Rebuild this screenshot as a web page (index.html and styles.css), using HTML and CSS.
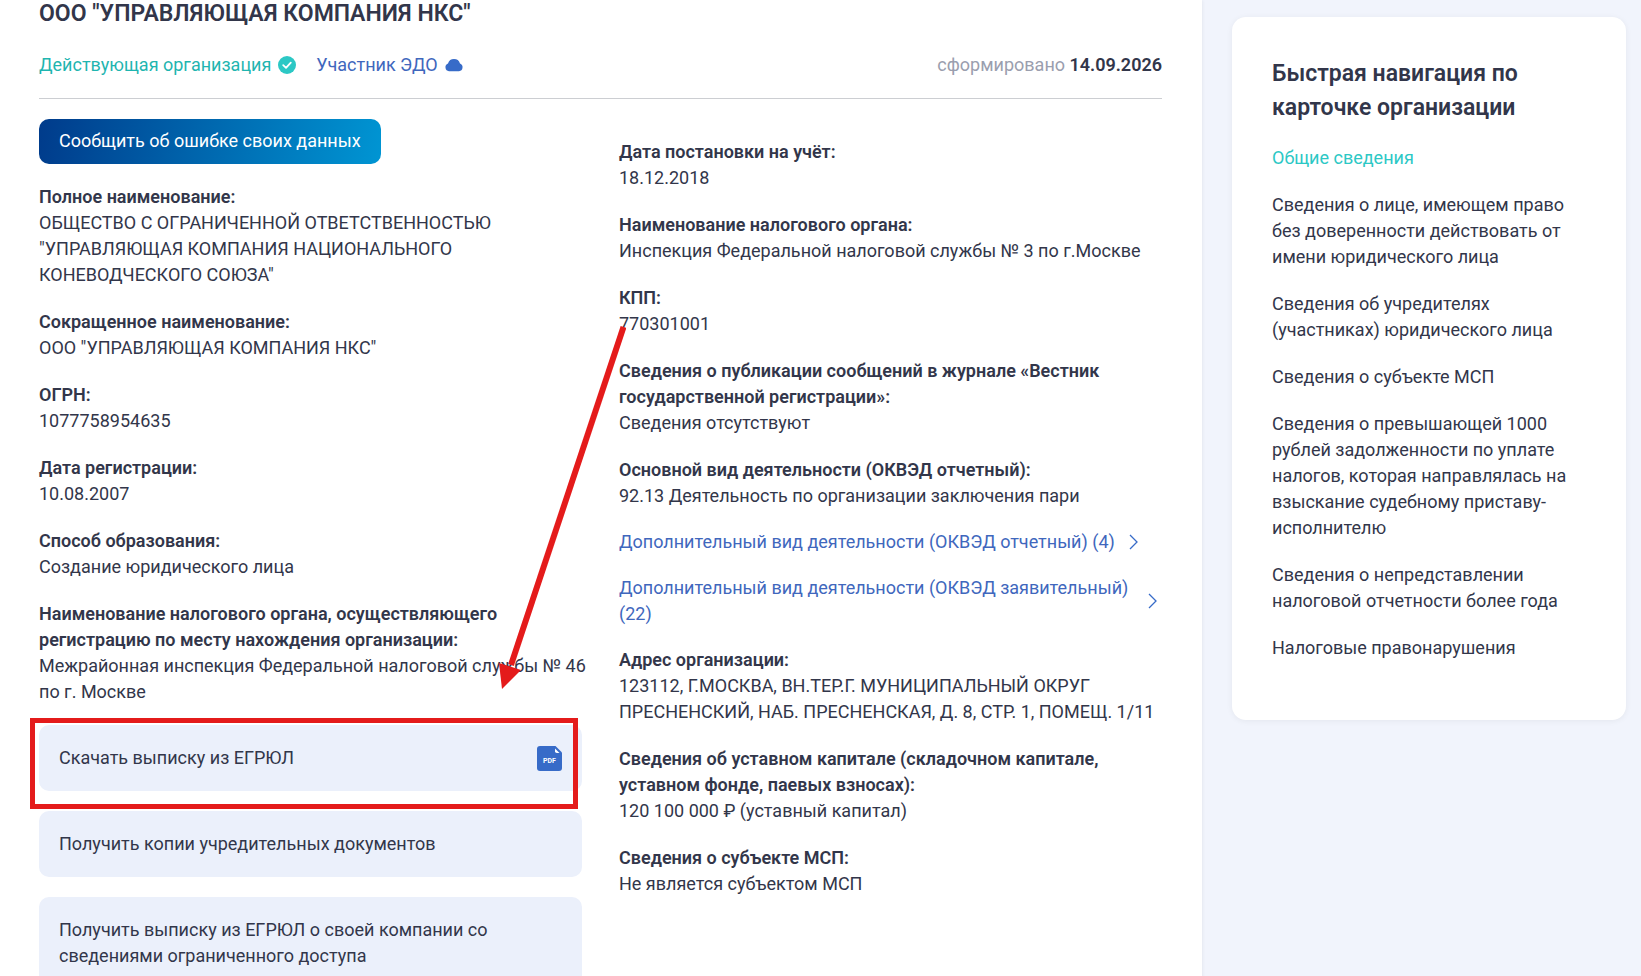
FILE: index.html
```html
<!DOCTYPE html>
<html lang="ru">
<head>
    <meta charset="UTF-8">
    <meta name="viewport" content="width=device-width, initial-scale=1.0">
    <title>ООО "УПРАВЛЯЮЩАЯ КОМПАНИЯ НКС"</title>
    <link rel="stylesheet" href="styles.css">
</head>
<body>
    <div class="page">
        <main class="card">
            <h1>ООО "УПРАВЛЯЮЩАЯ КОМПАНИЯ НКС"</h1>
            <div class="status-row">
                <span class="status status-active">Действующая организация
                    <svg width="18" height="18" viewBox="0 0 18 18" aria-hidden="true">
                        <circle cx="9" cy="9" r="9" fill="#2cc8c5"/>
                        <path d="M5.2 9.2 L8 11.8 L12.8 6.6" fill="none" stroke="#fff" stroke-width="1.8" stroke-linecap="round" stroke-linejoin="round"/>
                    </svg>
                </span>
                <span class="status status-edo">Участник ЭДО
                    <svg width="18" height="18" viewBox="0 0 18 18" aria-hidden="true">
                        <path d="M4 15.2 A4 4 0 0 1 3 7.5 A6.300 6.300 0 0 1 15 7.500 A4 4 0 0 1 14 15.2 Z" fill="#376bc8"/>
                    </svg>
                </span>
                <span class="formed">сформировано <b>14.09.2026</b></span>
            </div>

            <div class="columns">
                <div class="column">
                    <button type="button" class="report-button">Сообщить об ошибке своих данных</button>
                    <dl class="info">
                        <div>
                            <dt>Полное наименование:</dt>
                            <dd>ОБЩЕСТВО С ОГРАНИЧЕННОЙ ОТВЕТСТВЕННОСТЬЮ "УПРАВЛЯЮЩАЯ КОМПАНИЯ НАЦИОНАЛЬНОГО КОНЕВОДЧЕСКОГО СОЮЗА"</dd>
                        </div>
                        <div>
                            <dt>Сокращенное наименование:</dt>
                            <dd>ООО "УПРАВЛЯЮЩАЯ КОМПАНИЯ НКС"</dd>
                        </div>
                        <div>
                            <dt>ОГРН:</dt>
                            <dd>1077758954635</dd>
                        </div>
                        <div>
                            <dt>Дата регистрации:</dt>
                            <dd>10.08.2007</dd>
                        </div>
                        <div>
                            <dt>Способ образования:</dt>
                            <dd>Создание юридического лица</dd>
                        </div>
                        <div>
                            <dt>Наименование налогового органа, осуществляющего регистрацию по месту нахождения организации:</dt>
                            <dd class="nowrap">Межрайонная инспекция Федеральной налоговой службы № 46<br>по г. Москве</dd>
                        </div>
                    </dl>
                    <div class="actions">
                        <a href="#" class="action action-marked">
                            <span>Скачать выписку из ЕГРЮЛ</span>
                            <svg class="pdf-icon" width="25" height="25" viewBox="0 0 25 25" aria-hidden="true">
                                <path d="M3 0 H18.5 L25 6.5 V22 A3 3 0 0 1 22 25 H3 A3 3 0 0 1 0 22 V3 A3 3 0 0 1 3 0 Z" fill="#376bc8"/>
                                <path d="M18 2.5 V5.2 A1.8 1.8 0 0 0 19.8 7 H22.5 Z" fill="#fff"/>
                                <text x="12.5" y="16.5" text-anchor="middle" class="pdf-text">PDF</text>
                            </svg>
                        </a>
                        <a href="#" class="action">Получить копии учредительных документов</a>
                        <a href="#" class="action">Получить выписку из ЕГРЮЛ о своей компании со сведениями ограниченного доступа</a>
                    </div>
                </div>

                <div class="column column-right">
                    <dl class="info">
                        <div>
                            <dt>Дата постановки на учёт:</dt>
                            <dd>18.12.2018</dd>
                        </div>
                        <div>
                            <dt>Наименование налогового органа:</dt>
                            <dd>Инспекция Федеральной налоговой службы № 3 по г.Москве</dd>
                        </div>
                        <div>
                            <dt>КПП:</dt>
                            <dd>770301001</dd>
                        </div>
                        <div>
                            <dt>Сведения о публикации сообщений в журнале «Вестник государственной регистрации»:</dt>
                            <dd>Сведения отсутствуют</dd>
                        </div>
                        <div>
                            <dt>Основной вид деятельности (ОКВЭД отчетный):</dt>
                            <dd>92.13 Деятельность по организации заключения пари</dd>
                        </div>
                    </dl>
                    <div class="more-links">
                        <a href="#" class="more">
                            <span>Дополнительный вид деятельности (ОКВЭД отчетный) (4)</span>
                            <svg width="20" height="20" viewBox="0 0 20 20" aria-hidden="true">
                                <path d="M7 3 L14 10 L7 17" fill="none" stroke="#376bc8" stroke-width="1.3"/>
                            </svg>
                        </a>
                        <a href="#" class="more">
                            <span>Дополнительный вид деятельности (ОКВЭД заявительный) (22)</span>
                            <svg width="20" height="20" viewBox="0 0 20 20" aria-hidden="true">
                                <path d="M7 3 L14 10 L7 17" fill="none" stroke="#376bc8" stroke-width="1.3"/>
                            </svg>
                        </a>
                    </div>
                    <dl class="info">
                        <div>
                            <dt>Адрес организации:</dt>
                            <dd>123112, Г.МОСКВА, ВН.ТЕР.Г. МУНИЦИПАЛЬНЫЙ ОКРУГ ПРЕСНЕНСКИЙ, НАБ. ПРЕСНЕНСКАЯ, Д. 8, СТР. 1, ПОМЕЩ. 1/11</dd>
                        </div>
                        <div>
                            <dt>Сведения об уставном капитале (складочном капитале, уставном фонде, паевых взносах):</dt>
                            <dd>120 100 000 ₽ (уставный капитал)</dd>
                        </div>
                        <div>
                            <dt>Сведения о субъекте МСП:</dt>
                            <dd>Не является субъектом МСП</dd>
                        </div>
                    </dl>
                </div>
            </div>

            <svg class="arrow" width="130" height="370" viewBox="0 0 130 370" aria-hidden="true">
                <path d="M127.5 7 L15 345" stroke="#e41b1b" stroke-width="6"/>
                <path d="M3 343 L25 350 L6 369 Z" fill="#e41b1b"/>
            </svg>
        </main>

        <aside class="sidebar">
            <nav class="quick-nav" aria-labelledby="navTitle">
                <h2 id="navTitle">Быстрая навигация по карточке организации</h2>
                <ul>
                    <li><a href="#" class="current">Общие сведения</a></li>
                    <li><a href="#">Сведения о лице, имеющем право без доверенности действовать от имени юридического лица</a></li>
                    <li><a href="#">Сведения об учредителях (участниках) юридического лица</a></li>
                    <li><a href="#">Сведения о субъекте МСП</a></li>
                    <li><a href="#">Сведения о превышающей 1000 рублей задолженности по уплате налогов, которая направлялась на взыскание судебному приставу-исполнителю</a></li>
                    <li><a href="#">Сведения о непредставлении налоговой отчетности более года</a></li>
                    <li><a href="#">Налоговые правонарушения</a></li>
                </ul>
            </nav>
        </aside>
    </div>
</body>
</html>
```
FILE: styles.css
```css
* {
    box-sizing: border-box;
}
html {
    scrollbar-width: none;
}
body {
    margin: 0;
    font-family: Roboto, "Liberation Sans", sans-serif;
    font-size: 18px;
    line-height: 26px;
    color: #32364a;
    background-color: #f1f4fc;
}
a {
    color: inherit;
    text-decoration: none;
}
.page {
    display: flex;
    min-height: 100vh;
}
.card {
    position: relative;
    flex: 1;
    padding: 0 40px 40px 39px;
    background-color: #fff;
    box-shadow: 0 0 4px rgba(0, 0, 0, 0.08);
}
h1 {
    margin: 0 0 24px;
    font-size: 23px;
    line-height: 28px;
    font-weight: 600;
}
.status-row {
    display: flex;
    align-items: center;
    gap: 20px;
    padding-bottom: 20px;
    border-bottom: 1px solid #ccced2;
}
.status {
    display: flex;
    align-items: center;
    gap: 7px;
}
.status-active {
    color: #1fb5b0;
}
.status-edo {
    color: #4067bd;
}
.formed {
    margin-left: auto;
    color: #9a9eae;
}
.formed b {
    font-weight: 600;
    color: #32364a;
}
.columns {
    display: grid;
    grid-template-columns: minmax(0, 1fr) minmax(0, 1fr);
    gap: 37px;
    padding-top: 20px;
}
.column-right {
    padding-top: 20px;
}
.report-button {
    display: block;
    height: 45px;
    margin-bottom: 20px;
    padding: 0 20px 2px;
    border: none;
    border-radius: 10px;
    background: linear-gradient(100deg, #003b8b, #0095d3);
    color: #fff;
    font-family: inherit;
    font-size: 18px;
    cursor: pointer;
}
.info {
    display: grid;
    gap: 21px;
    margin: 0;
}
dt {
    font-weight: 600;
}
dd {
    margin: 0;
}
.nowrap {
    white-space: nowrap;
}
.more-links {
    display: grid;
    gap: 20px;
    margin: 20px 0;
}
.more {
    display: flex;
    align-items: center;
    gap: 8px;
    color: #4067bd;
}
.more svg {
    flex-shrink: 0;
}
.actions {
    display: grid;
    gap: 20px;
    margin-top: 20px;
}
.action {
    display: flex;
    align-items: center;
    justify-content: space-between;
    padding: 20px;
    border-radius: 10px;
    background-color: #ebf0fb;
}
.pdf-icon {
    flex-shrink: 0;
}
.pdf-text {
    font-size: 7px;
    font-weight: 700;
    fill: #fff;
}
/* red frame around the download link */
.action-marked {
    position: relative;
}
.action-marked::after {
    content: "";
    position: absolute;
    top: -7px;
    right: 4px;
    bottom: -18px;
    left: -9px;
    border: 5px solid #e41b1b;
}
.arrow {
    position: absolute;
    top: 320px;
    left: 496px;
    pointer-events: none;
}
.sidebar {
    width: 439px;
    padding: 17px 15px 40px 30px;
}
.quick-nav {
    padding: 40px 40px 38px;
    border-radius: 14px;
    background-color: #fff;
    box-shadow: 0 1px 6px rgba(0, 0, 0, 0.06);
}
.quick-nav h2 {
    margin: 0 0 20px;
    font-size: 23px;
    line-height: 34px;
    font-weight: 600;
}
.quick-nav ul {
    margin: 0;
    padding: 0;
    list-style: none;
}
.quick-nav li {
    margin-bottom: 21px;
}
.quick-nav .current {
    color: #2cc8c5;
}
```
